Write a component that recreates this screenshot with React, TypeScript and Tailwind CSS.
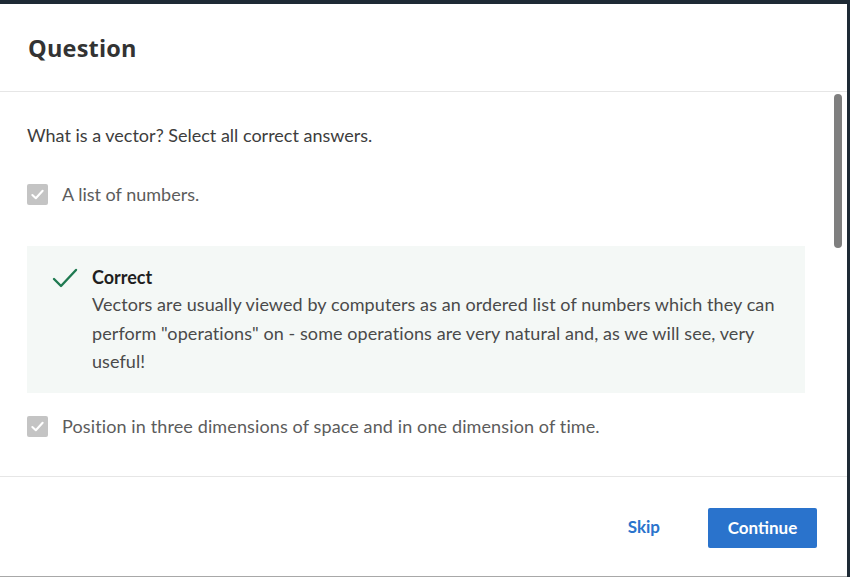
import React from "react";

function CheckBox() {
  return (
    <div className="w-[21px] h-[21px] rounded-[2px] bg-[#c4c4c4] flex items-center justify-center shrink-0">
      <svg width="15" height="15" viewBox="0 0 16 16" fill="none">
        <path d="M2.5 8.5 L6.2 12 L13.5 4" stroke="white" strokeWidth="2.2" strokeLinecap="round" strokeLinejoin="round" />
      </svg>
    </div>
  );
}

export default function App() {
  const font = { fontFamily: "Lato, 'Open Sans', sans-serif" };
  return (
    <div className="w-[850px] h-[577px] bg-[#1e2a35] pt-[4px]" style={font}>
      <div className="w-[847px] h-[573px] bg-white border-b border-[#a8a8a8] flex flex-col">
        {/* header */}
        <div className="h-[88px] border-b border-[#e6e6e6] flex items-center px-[28px] pt-[2px] shrink-0">
          <h2
            className="text-[23.5px] font-bold text-[#333333] tracking-[0.2px]"
            style={{ fontFamily: "'Open Sans', sans-serif" }}
          >
            Question
          </h2>
        </div>

        {/* body */}
        <div className="flex flex-1 overflow-hidden border-b border-[#e6e6e6]">
          <div className="flex-1 pl-[27px] pr-[29px] pt-[31px] text-[#555555]">
            <p className="text-[18px] text-[#3d3d3d] leading-[24px]">
              What is a vector? Select all correct answers.
            </p>

            <div className="flex items-center gap-[14px] mt-[34px]">
              <CheckBox />
              <span className="text-[18px] text-[#5c5c5c]">A list of numbers.</span>
            </div>

            <div className="mt-[38px] bg-[#f4f8f6] pl-[25px] pr-[20px] pt-[19px] pb-[17px] flex gap-[14px]">
              <svg width="26" height="22" viewBox="0 0 26 22" fill="none" className="mt-[2px] shrink-0">
                <path d="M2 12 L9 19 L24 3" stroke="#1f7a51" strokeWidth="2.4" strokeLinecap="round" strokeLinejoin="round" />
              </svg>
              <div>
                <div className="text-[18px] font-bold text-[#1f1f1f] leading-[24px]">Correct</div>
                <p className="text-[18px] text-[#4a4a4a] leading-[28.5px] mt-[1px] tracking-[0.08px]">
                  Vectors are usually viewed by computers as an ordered list of numbers which they can perform
                  "operations" on - some operations are very natural and, as we will see, very useful!
                </p>
              </div>
            </div>

            <div className="flex items-center gap-[14px] mt-[20px]">
              <CheckBox />
              <span className="text-[18px] text-[#5c5c5c] tracking-[0.12px]">
                Position in three dimensions of space and in one dimension of time.
              </span>
            </div>
          </div>

          {/* scrollbar */}
          <div className="w-[13px] pt-[2px] shrink-0">
            <div className="w-[8px] h-[154px] rounded-full bg-[#7f7f7f]" />
          </div>
        </div>

        {/* footer */}
        <div className="h-[99px] flex items-center justify-end pr-[30px] gap-[48px] shrink-0">
          <button className="text-[17px] font-bold text-[#2a73cc]">Skip</button>
          <button className="w-[109px] h-[40px] bg-[#2a73cc] text-white text-[17px] font-bold rounded-[2px] mt-[2px]">
            Continue
          </button>
        </div>
      </div>
    </div>
  );
}
